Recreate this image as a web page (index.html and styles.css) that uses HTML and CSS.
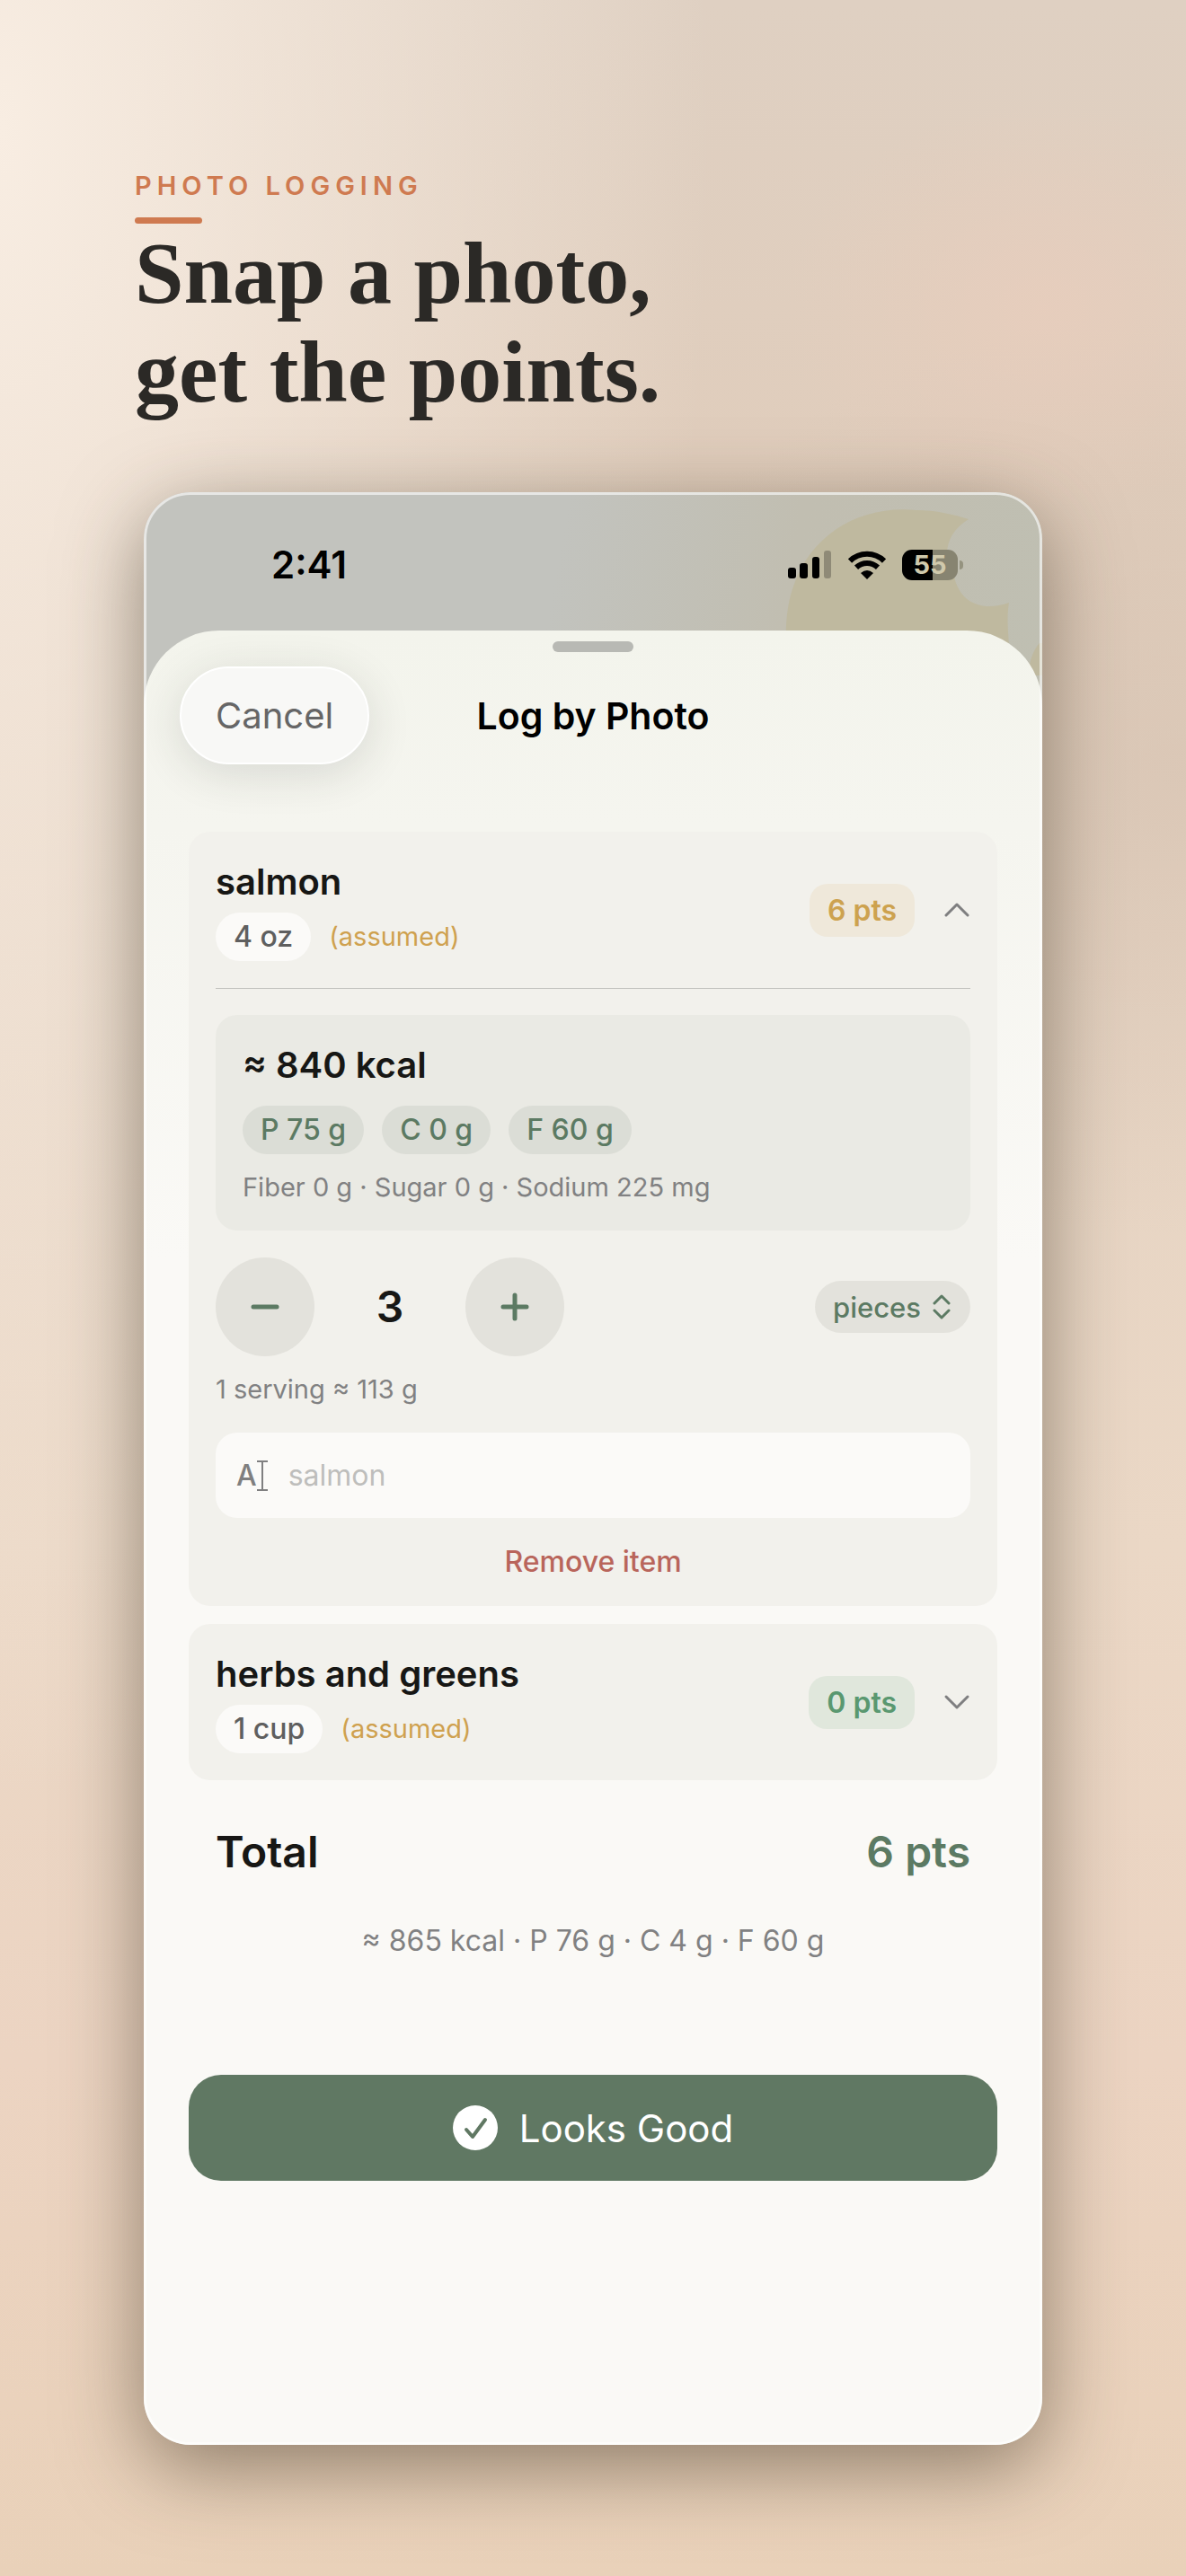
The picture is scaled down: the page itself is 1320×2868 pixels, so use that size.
FILE: index.html
```html
<!DOCTYPE html>
<html lang="en">
<head>
<meta charset="utf-8">
<meta name="viewport" content="width=device-width, initial-scale=1">
<title>Photo Logging</title>
<link rel="stylesheet" href="styles.css">
</head>
<body>
<div class="page">
  <header class="intro">
    <p class="eyebrow">PHOTO LOGGING</p>
    <h1 class="headline">Snap a photo,<br>get the points.</h1>
  </header>

  <main class="phone">
    <svg class="moon" viewBox="0 0 290 204" aria-hidden="true">
      <path d="M208 30C182 46 178 72 192 94C198 122 222 134 253 123C250 140 252 158 256 204H10C2 172 3 130 14 102C34 46 88 14 150 20C172 20 192 25 208 30Z"/>
      <path d="M287 168C280 176 276 186 274 204H290V168Z"/>
    </svg>

    <div class="status">
      <span class="clock">2:41</span>
      <div class="indicators">
        <svg class="signal" viewBox="0 0 49 32" aria-hidden="true">
          <rect x="0" y="19" width="9" height="12" rx="3"/>
          <rect x="13" y="14" width="9" height="17" rx="3"/>
          <rect x="27" y="7" width="8" height="24" rx="3"/>
          <rect x="40" y="0" width="8" height="31" rx="3" opacity=".25"/>
        </svg>
        <svg class="wifi" viewBox="0 0 42 32" aria-hidden="true">
          <g fill="none" stroke="#000" stroke-width="6">
            <path d="M2 11.500A27 27 0 0 1 40 11.500"/>
            <path d="M9 18.700A17.500 17.500 0 0 1 33 18.700"/>
          </g>
          <path d="M21 32L14 25Q21 19 28 25Z"/>
        </svg>
        <div class="battery"><span class="charge">55</span><i class="nub"></i></div>
      </div>
    </div>

    <section class="sheet">
      <div class="grabber"></div>
      <div class="toolbar">
        <button class="cancel" type="button">Cancel</button>
        <h2 class="title">Log by Photo</h2>
      </div>

      <article class="card">
        <div class="item-head">
          <div class="item-info">
            <h3 class="item-name">salmon</h3>
            <div class="tags"><span class="pill amount">4 oz</span><span class="assumed">(assumed)</span></div>
          </div>
          <span class="badge amber">6 pts</span>
          <button class="toggle" type="button" aria-label="Collapse salmon" aria-expanded="true">
            <svg viewBox="0 0 30 18" aria-hidden="true"><path d="M3 15L15 3L27 15"/></svg>
          </button>
        </div>
        <hr class="rule">
        <div class="nutrition">
          <p class="kcal">≈ 840 kcal</p>
          <div class="macros"><span class="pill macro">P 75 g</span><span class="pill macro">C 0 g</span><span class="pill macro">F 60 g</span></div>
          <p class="note">Fiber 0 g · Sugar 0 g · Sodium 225 mg</p>
        </div>
        <div class="quantity">
          <div class="stepper">
            <button class="step" type="button" aria-label="Decrease">
              <svg viewBox="0 0 32 32" aria-hidden="true"><path d="M3 16H29"/></svg>
            </button>
            <output class="count">3</output>
            <button class="step" type="button" aria-label="Increase">
              <svg viewBox="0 0 32 32" aria-hidden="true"><path d="M3 16H29M16 3V29"/></svg>
            </button>
          </div>
          <label class="unit">
            <select class="unit-select" aria-label="Unit"><option>pieces</option></select>
            <svg viewBox="0 0 20 28" aria-hidden="true"><path d="M2 10L10 2L18 10M2 18L10 26L18 18"/></svg>
          </label>
        </div>
        <p class="note serving">1 serving ≈ 113 g</p>
        <label class="field">
          <span class="field-icon" aria-hidden="true">A<svg viewBox="0 0 12 34"><path d="M0 1H12M0 33H12M6 1V33"/></svg></span>
          <input class="field-input" type="text" placeholder="salmon" aria-label="Item name">
        </label>
        <button class="remove" type="button">Remove item</button>
      </article>

      <article class="card">
        <div class="item-head">
          <div class="item-info">
            <h3 class="item-name">herbs and greens</h3>
            <div class="tags"><span class="pill amount">1 cup</span><span class="assumed">(assumed)</span></div>
          </div>
          <span class="badge green">0 pts</span>
          <button class="toggle" type="button" aria-label="Expand herbs and greens" aria-expanded="false">
            <svg viewBox="0 0 30 18" aria-hidden="true"><path d="M3 3L15 15L27 3"/></svg>
          </button>
        </div>
      </article>

      <div class="total"><span>Total</span><strong class="total-points">6 pts</strong></div>
      <p class="summary">≈ 865 kcal · P 76 g · C 4 g · F 60 g</p>
      <button class="confirm" type="button">
        <svg viewBox="0 0 50 50" aria-hidden="true"><circle cx="25" cy="25" r="25" fill="#fff"/><path d="M15 27L22 35L36 16" fill="none" stroke="#607863" stroke-width="4" stroke-linecap="round" stroke-linejoin="round"/></svg>
        Looks Good
      </button>
    </section>
  </main>
</div>
</body>
</html>
```
FILE: styles.css
```css
* { box-sizing: border-box; }

body {
  margin: 0;
  font-family: Inter, "Liberation Sans", sans-serif;
  color: #171715;
  background: #ecd6c3;
}

h1, h2, h3, p { margin: 0; }

button, input, select {
  margin: 0;
  padding: 0;
  border: 0;
  background: none;
  color: inherit;
  font: inherit;
  appearance: none;
}

button { cursor: pointer; }

svg { display: block; }

.page {
  padding: 190px 160px 146px;
  background:
    radial-gradient(ellipse 22% 8% at 88% 12%, rgba(233, 205, 188, .7), rgba(233, 205, 188, 0)),
    radial-gradient(ellipse 50% 18% at 100% 30%, rgba(210, 190, 173, .5), rgba(210, 190, 173, 0)),
    radial-gradient(ellipse 60% 65% at 0% 5%, #f8ede2 0%, rgba(247, 235, 223, 0) 100%),
    linear-gradient(180deg, #dfd0c2 0%, #e0cdbc 18%, #e6d4c3 40%, #ebd8c6 60%, #ecd4c2 80%, #e9d1b9 100%);
}

.intro {
  margin: 0 -10px;
}

.eyebrow {
  font-size: 29px;
  line-height: 34px;
  font-weight: 600;
  letter-spacing: 6px;
  color: #cf7a50;
}

.eyebrow::after {
  content: "";
  display: block;
  width: 75px;
  height: 7px;
  margin-top: 18px;
  border-radius: 4px;
  background: #cf7a50;
}

.headline {
  font-family: "Liberation Serif", serif;
  font-size: 98px;
  line-height: 110px;
  font-weight: 700;
  color: #2b2926;
}

.phone {
  position: relative;
  max-width: 1000px;
  margin: 79px auto 0;
  border-radius: 52px;
  overflow: hidden;
  background: linear-gradient(100deg, #c2c3be 45%, #c1beb1 70%, #bfbfb2);
  background-size: 100% 300px;
  box-shadow: 0 24px 90px rgba(66, 56, 38, .56);
}

.phone::after {
  content: "";
  position: absolute;
  inset: 0;
  border: 3px solid rgba(255, 255, 255, .6);
  border-radius: inherit;
  pointer-events: none;
}

.moon {
  position: absolute;
  top: 0;
  right: 0;
  width: 290px;
  fill: #bfb99f;
}

.status {
  position: relative;
  display: flex;
  justify-content: space-between;
  align-items: center;
  height: 154px;
  padding: 8px 88px 0 142px;
  color: #000;
}

.clock {
  font-size: 42px;
  line-height: 50px;
  font-weight: 600;
}

.indicators {
  display: flex;
  align-items: center;
  gap: 18px;
}

.signal { width: 49px; }
.wifi { width: 42px; }

.battery {
  position: relative;
  width: 62px;
  height: 34px;
  margin-right: 6px;
  border-radius: 11px;
  background: linear-gradient(90deg, #000 55%, #878471 55%);
  color: #d0c9ac;
  font-size: 29px;
  line-height: 34px;
  font-weight: 700;
  text-align: center;
}

.nub {
  position: absolute;
  top: 12px;
  right: -6px;
  width: 4px;
  height: 10px;
  border-radius: 0 4px 4px 0;
  background: #95937f;
}

.sheet {
  position: relative;
  padding: 12px 50px 294px;
  border-radius: 84px 84px 0 0;
  background: linear-gradient(180deg, #f3f4ec 0, #f5f5ef 220px, #faf9f6 700px);
}

.grabber {
  width: 90px;
  height: 12px;
  margin: 0 auto 16px;
  border-radius: 6px;
  background: #b8b9b4;
}

.toolbar {
  display: grid;
  grid-template-columns: 1fr auto 1fr;
  align-items: center;
  margin: 0 -10px 75px;
}

.cancel {
  justify-self: start;
  height: 109px;
  padding: 0 38px;
  border: 2px solid #fff;
  border-radius: 55px;
  background: #f8f8f6;
  box-shadow: 0 10px 50px rgba(40, 50, 40, .14);
  color: #666;
  font-size: 40px;
}

.title {
  color: #000;
  font-size: 41px;
  line-height: 52px;
  font-weight: 600;
}

.card {
  margin-bottom: 20px;
  padding: 30px;
  border-radius: 24px;
  background: #f2f1ec;
}

.item-head {
  display: flex;
  align-items: center;
}

.item-info { flex: 1; }

.item-name,
.kcal {
  font-size: 40px;
  line-height: 52px;
  font-weight: 600;
}

.tags {
  display: flex;
  align-items: center;
  gap: 20px;
  margin-top: 8px;
}

.pill {
  height: 54px;
  padding: 0 20px;
  border-radius: 27px;
  font-size: 32px;
  line-height: 54px;
  font-weight: 500;
}

.amount {
  background: #fbfaf8;
  color: #5f5f5f;
}

.assumed {
  color: #cfa14f;
  font-size: 29px;
  line-height: 36px;
}

.badge {
  padding: 10px 20px;
  border-radius: 20px;
  font-size: 32px;
  line-height: 39px;
  font-weight: 600;
}

.amber { background: #efe8da; color: #cda24f; }
.green { background: #e0e7dc; color: #5a9870; }

.toggle {
  margin-left: 32px;
}

.toggle svg {
  width: 30px;
  fill: none;
  stroke: #7f7f80;
  stroke-width: 3;
  stroke-linecap: round;
  stroke-linejoin: round;
}

.rule {
  height: 1px;
  margin: 30px 0 29px;
  border: 0;
  background: #c4c4c0;
}

.nutrition {
  display: grid;
  gap: 19px;
  padding: 30px;
  border-radius: 24px;
  background: #eaeae4;
}

.macros {
  display: flex;
  gap: 20px;
}

.macro {
  background: #dbddd6;
  color: #5c7a63;
}

.note {
  color: #818182;
  font-size: 29px;
  line-height: 36px;
}

.quantity {
  display: flex;
  align-items: center;
  justify-content: space-between;
  margin-top: 30px;
}

.stepper {
  display: flex;
  align-items: center;
}

.step {
  display: grid;
  place-items: center;
  width: 110px;
  height: 110px;
  border-radius: 50%;
  background: #e3e2dc;
}

.step svg {
  width: 32px;
  stroke: #5c7a63;
  stroke-width: 5;
  stroke-linecap: round;
}

.count {
  min-width: 168px;
  font-size: 48px;
  line-height: 60px;
  font-weight: 600;
  text-align: center;
}

.unit {
  display: flex;
  align-items: center;
  gap: 13px;
  height: 58px;
  padding: 0 22px 0 20px;
  border-radius: 29px;
  background: #e3e2dc;
  color: #5c7a63;
  font-size: 31px;
  font-weight: 500;
}

.unit svg {
  width: 20px;
  fill: none;
  stroke: currentColor;
  stroke-width: 3;
  stroke-linecap: round;
  stroke-linejoin: round;
}

.serving {
  margin-top: 19px;
}

.field {
  display: flex;
  align-items: center;
  gap: 23px;
  height: 95px;
  margin-top: 30px;
  padding: 0 23px;
  border-radius: 24px;
  background: #fbfaf8;
  font-size: 32px;
}

.field-icon {
  display: flex;
  align-items: center;
  color: #7f7f80;
  font-weight: 500;
}

.field-icon svg {
  width: 12px;
  fill: none;
  stroke: currentColor;
  stroke-width: 2;
}

.field-input {
  flex: 1;
  min-width: 0;
  outline: 0;
}

.field-input::placeholder {
  color: #bebebc;
  opacity: 1;
}

.remove {
  display: block;
  margin: 30px auto 0;
  color: #b9655b;
  font-size: 32px;
  line-height: 38px;
  font-weight: 500;
}

.total {
  display: flex;
  justify-content: space-between;
  margin-top: 50px;
  padding: 0 30px;
  font-size: 48px;
  line-height: 60px;
  font-weight: 600;
}

.total-points {
  color: #5c7a63;
  font-weight: 600;
}

.summary {
  margin-top: 50px;
  color: #818182;
  font-size: 32px;
  line-height: 38px;
  text-align: center;
}

.confirm {
  display: flex;
  align-items: center;
  justify-content: center;
  gap: 24px;
  width: 100%;
  height: 118px;
  margin-top: 130px;
  border-radius: 36px;
  background: #607863;
  color: #fff;
  font-size: 42px;
}

.confirm svg { width: 50px; }
```
